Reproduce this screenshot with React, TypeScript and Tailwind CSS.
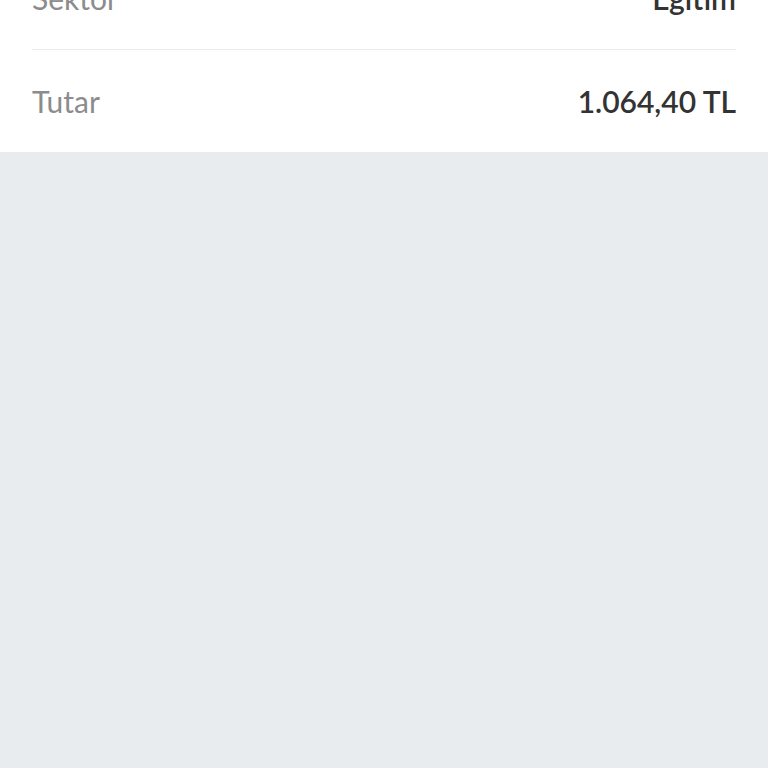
const rows = [
  { label: 'Sektör', value: 'Eğitim' },
  { label: 'Tutar', value: '1.064,40 TL' },
]

export default function App() {
  return (
    <div className="min-h-screen bg-[#e8ecef]" style={{ fontFamily: 'Lato, "Open Sans", sans-serif' }}>
      <div className="overflow-hidden bg-white">
        <div className="-mt-[53px] px-8">
          {rows.map((row, i) => (
            <div
              key={row.label}
              className={`flex items-center justify-between ${
                i < rows.length - 1 ? 'h-[103px] border-b border-[#ebebeb]' : 'h-[102px]'
              }`}
            >
              <span className="text-[30px] text-[#8c8c8c]">{row.label}</span>
              <span className="text-[30px] font-semibold text-[#333333]">{row.value}</span>
            </div>
          ))}
        </div>
      </div>
    </div>
  )
}
